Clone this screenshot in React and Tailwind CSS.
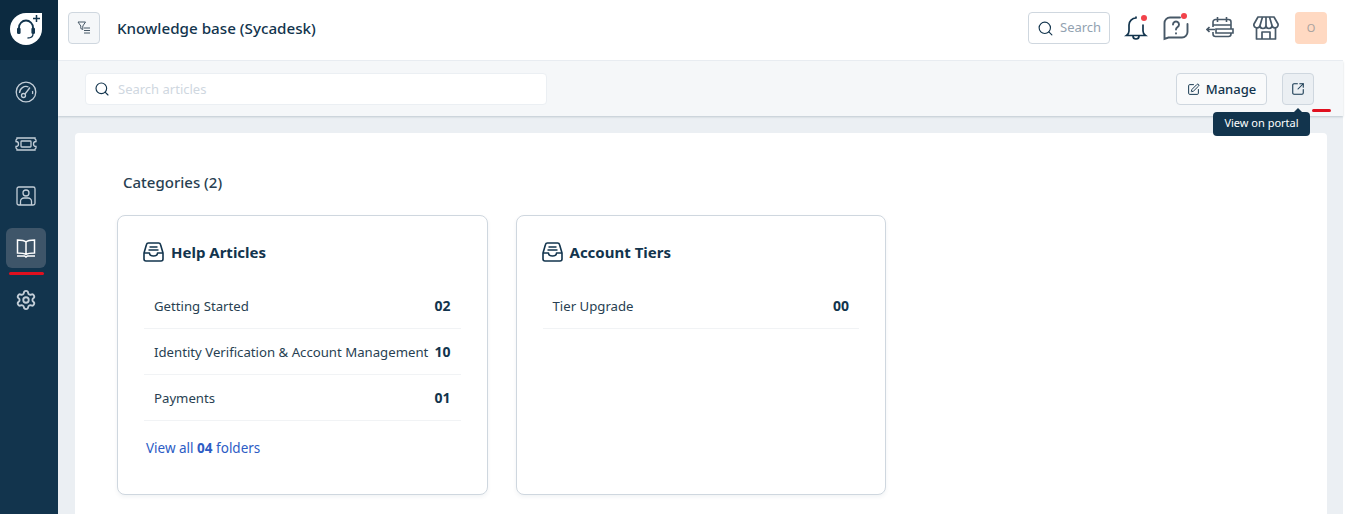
import { Search, Settings, SquarePen, SquareArrowOutUpRight } from 'lucide-react'

const folders = [
  {
    title: 'Help Articles',
    rows: [
      ['Getting Started', '02'],
      ['Identity Verification & Account Management', '10'],
      ['Payments', '01'],
    ],
    more: '04',
  },
  { title: 'Account Tiers', rows: [['Tier Upgrade', '00']] },
]

function Logo() {
  return (
    <svg width="32" height="32" viewBox="0 0 32 32" fill="none">
      <path d="M16 0h16v16a16 16 0 0 1-16 16A16 16 0 0 1 16 0z" fill="#fff" />
      <path d="M9 19v-4.500a7 7 0 0 1 14 0V19" stroke="#12344d" strokeWidth="1.800" />
      <rect x="7" y="14.500" width="3.600" height="6.500" rx="1.500" fill="#12344d" />
      <rect x="21.400" y="14.500" width="3.600" height="6.500" rx="1.500" fill="#12344d" />
      <path d="M23 21c0 3-2 4-5.500 4" stroke="#12344d" strokeWidth="1.300" />
      <path d="M26.500 2v7M23 5.500h7" stroke="#12344d" strokeWidth="1.500" />
    </svg>
  )
}

function FilterIcon() {
  return (
    <svg width="14" height="14" viewBox="0 0 14 14" fill="none" stroke="#475867" strokeWidth="1">
      <path d="M1 1h7.500L5.800 5v3.500L3.800 7.500V5z" />
      <path d="M7 7h6M7 9.500h6M7 12h6" />
    </svg>
  )
}

function GaugeIcon(props) {
  return (
    <svg viewBox="0 0 22 22" fill="none" stroke="currentColor" strokeWidth="1.300" {...props}>
      <circle cx="11" cy="11" r="9.800" />
      <path d="M4.500 12a6.500 6.500 0 0 1 9-6M17.500 10a6.500 6.500 0 0 1 0 3" />
      <circle cx="8.500" cy="14.500" r="2" />
      <path d="M10 13l5-6.500" />
    </svg>
  )
}

function TicketIcon(props) {
  return (
    <svg viewBox="0 0 22 22" fill="none" stroke="currentColor" strokeWidth="1.300" {...props}>
      <path d="M2 5h18a2 2 0 0 0 1 2v1.500a2.500 2.500 0 0 0 0 5V15a2 2 0 0 0-1 2H2a2 2 0 0 0-1-2v-1.500a2.500 2.500 0 0 0 0-5V7a2 2 0 0 0 1-2z" />
      <rect x="6" y="8" width="10" height="6" rx="0.800" />
    </svg>
  )
}

function ContactIcon(props) {
  return (
    <svg viewBox="0 0 22 22" fill="none" stroke="currentColor" strokeWidth="1.300" {...props}>
      <rect x="2" y="2" width="18" height="18" rx="1.800" />
      <circle cx="11" cy="8" r="3" />
      <path d="M5.500 20v-3.500a3.500 3.500 0 0 1 3.500-3.500h4a3.500 3.500 0 0 1 3.500 3.500V20" />
    </svg>
  )
}

function BookIcon(props) {
  return (
    <svg viewBox="0 0 22 22" fill="none" stroke="currentColor" strokeWidth="1.500" {...props}>
      <path d="M11 5C9.500 3.500 6 3 2.500 3v13c3.500 0 7 .3 8.500 1.500C12.500 16.300 16 16 19.500 16V3C16 3 12.500 3.500 11 5zM11 5v12.500" />
      <path d="M2 19h7.500l1.500 1 1.500-1H20" />
    </svg>
  )
}

function BellIcon() {
  return (
    <svg width="24" height="28" viewBox="0 0 24 28" fill="none" stroke="#12344d" strokeWidth="1.700" strokeLinecap="round">
      <path d="M12 3v1M12 4a7 7 0 0 0-7 7v6c0 2-1 3.500-2.500 4.500h19C20 20.500 19 19 19 17v-6" />
      <path d="M9 22c0 4 6 4 6 0" />
    </svg>
  )
}

function HelpIcon() {
  return (
    <svg width="26" height="26" viewBox="0 0 26 26" fill="none" stroke="#475867" strokeWidth="1.900" strokeLinecap="round">
      <path d="M17 2.500H7A5.500 5.500 0 0 0 1.500 8v16l4-1.500H19a5.500 5.500 0 0 0 5.500-5.500V9" />
      <path d="M10 9.500a3 3 0 1 1 4.500 2.600c-1 .6-1.500 1.200-1.500 2.400" />
      <path d="M13 18.200v.3" />
    </svg>
  )
}

function CalendarBack() {
  return (
    <svg width="28" height="24" viewBox="0 0 28 24" fill="none" stroke="#475867" strokeWidth="1.600">
      <path d="M7 11V6a2.500 2.500 0 0 1 2.500-2.500h13A2.500 2.500 0 0 1 25 6v7M7 16v2a2.500 2.500 0 0 0 2.500 2.500h13A2.500 2.500 0 0 0 25 18v-1" />
      <path d="M11.500 1v5M20.500 1v5M7 9h18M10 13h17v4H10z" />
      <path d="M1 13.500h8M3.500 11 1 13.500 3.500 16" />
    </svg>
  )
}

function StoreIcon() {
  return (
    <svg width="26" height="26" viewBox="0 0 26 26" fill="none" stroke="#475867" strokeWidth="1.700" strokeLinejoin="round">
      <path d="M5 2h16l4 7a3 3 0 0 1-6 1.500 3 3 0 0 1-6 0 3 3 0 0 1-6 0A3 3 0 0 1 1 9z" />
      <path d="M9.500 2 7 10.500M16.500 2 19 10.500M13 2v8.500" />
      <path d="M3.500 13v11h19V13M9 24v-7h8v7" />
    </svg>
  )
}

function TrayIcon() {
  return (
    <svg width="21" height="20" viewBox="0 0 21 20" fill="none" stroke="#12344d" strokeWidth="1.600" strokeLinejoin="round">
      <path d="M1 11 3.500 2.500A2 2 0 0 1 5.500 1h10a2 2 0 0 1 2 1.500L20 11v6a2 2 0 0 1-2 2H3a2 2 0 0 1-2-2z" />
      <path d="M1 11h5.500c0 4 8 4 8 0H20M6.500 5h8M5.500 8h10" />
    </svg>
  )
}

function NavItem({ icon: Icon, active }) {
  return (
    <div className={active ? 'relative flex h-10 w-10 items-center justify-center rounded-md bg-[#3e5569] text-white' : 'relative flex h-10 w-10 items-center justify-center rounded-md text-[#c3ced8]'}>
      <Icon width={22} height={22} />
      {active && <span className="absolute left-[3px] top-[44px] h-[3px] w-[35px] rounded-full bg-[#e0101f]" />}
    </div>
  )
}

function Card({ title, rows, more }) {
  return (
    <div className="h-[280px] w-[370.5px] rounded-lg border border-[#cfd7df] bg-white px-[26px] pt-[26px] shadow-[0_2px_4px_rgba(18,52,77,0.06)]">
      <div className="-ml-px flex h-5 items-center gap-[7px] text-[15px] font-bold text-[#12344d]">
        <TrayIcon />
        {title}
      </div>
      <div className="mt-[21px]">
        {rows.map(([name, n]) => (
          <div key={name} className="flex h-[46px] items-center justify-between border-b border-[#f1f3f5] px-[10px] text-[13.2px] text-[#283f52]">
            <span className="pt-[2px]">{name}</span>
            <span className="text-[14px] font-bold text-[#12344d]">{n}</span>
          </div>
        ))}
      </div>
      {more && (
        <div className="ml-[2px] mt-[17px] text-[13.5px] text-[#2c5cc5]">
          View all <b>{more}</b> folders
        </div>
      )}
    </div>
  )
}

export default function App() {
  return (
    <div className="flex h-[514px] w-[1345px] overflow-hidden bg-white font-['Noto_Sans',sans-serif] text-[#12344d]">
      <aside className="w-[58px] shrink-0 bg-[#12344d]">
        <div className="flex h-[60px] items-center bg-[#0c2a40] pb-[2px] pl-[10px]">
          <Logo />
        </div>
        <nav className="flex flex-col gap-3 pl-[6px] pt-[12px]">
          <NavItem icon={GaugeIcon} />
          <NavItem icon={TicketIcon} />
          <NavItem icon={ContactIcon} />
          <NavItem icon={BookIcon} active />
          <NavItem icon={Settings} />
        </nav>
      </aside>

      <div className="mr-[2px] flex min-w-0 flex-1 flex-col bg-[#ebeff3]">
        <header className="flex h-[61px] shrink-0 items-center border-b border-[#ebeff3] bg-white pb-[4px] pl-[10px] pr-[16px]">
          <button className="flex h-8 w-8 items-center justify-center rounded border border-[#cfd7df] bg-[#f5f7f9]">
            <FilterIcon />
          </button>
          <h1 className="ml-[17px] text-[15.2px] font-medium">Knowledge base (Sycadesk)</h1>
          <div className="ml-auto flex items-center">
            <div className="ml-px flex h-8 w-[82px] items-center gap-[6px] rounded border border-[#cfd7df] pl-2 text-[13px] text-[#92a2b1]">
              <Search size={17} color="#12344d" strokeWidth={1.6} />
              Search
            </div>
            <div className="relative ml-[14px]">
              <BellIcon />
              <span className="absolute right-[1px] top-[1px] h-[6px] w-[6px] rounded-full bg-[#f2424a]" />
            </div>
            <div className="relative ml-[15px]">
              <HelpIcon />
              <span className="absolute right-[2px] top-[-2px] h-[6px] w-[6px] rounded-full bg-[#f2424a]" />
            </div>
            <div className="ml-[17px]"><CalendarBack /></div>
            <div className="ml-[19px]"><StoreIcon /></div>
            <div className="ml-[16px] flex h-8 w-8 items-center justify-center rounded bg-[#ffd9c2] text-[11px] text-[#a8a29e]">O</div>
          </div>
        </header>

        <div className="flex h-[55px] shrink-0 items-center bg-[#f5f7f9] pl-[27px] pr-[29px] shadow-[0_1px_2px_rgba(18,52,77,0.2)]">
          <div className="flex h-8 w-[462px] items-center gap-[8px] rounded border border-[#ebeff3] bg-white pl-[8px] text-[13px] text-[#cfd7df]">
            <Search size={16} color="#12344d" strokeWidth={1.7} />
            <span className="pt-[2px]">Search articles</span>
          </div>
          <button className="ml-auto flex h-8 w-[91px] items-center justify-center gap-[6px] rounded border border-[#cfd7df] bg-[#f9fafb] text-[13px] font-medium">
            <SquarePen size={13} strokeWidth={1.8} className="mt-[2px]" />
            <span className="pt-[3px]">Manage</span>
          </button>
          <div className="relative ml-[15px]">
            <button className="flex h-8 w-8 items-center justify-center rounded border border-[#cfd7df] bg-[#ebeff3]">
              <SquareArrowOutUpRight size={14} strokeWidth={1.8} />
            </button>
            <span className="absolute left-[30px] top-[36px] h-[3px] w-[19px] rounded-full bg-[#e0101f]" />
            <div className="absolute left-[-69px] top-[39px] z-10 flex h-[24px] w-[97px] items-center justify-center rounded-sm bg-[#12344d] text-[11px] text-white">
              View on portal
            </div>
            <span className="absolute left-[12px] top-[35px] z-10 h-0 w-0 border-x-[4px] border-b-[4px] border-x-transparent border-b-[#12344d]" />
          </div>
        </div>

        <main className="ml-[17px] mr-[16px] mt-[17px] min-h-0 flex-1 rounded-t bg-white pl-[42px] pt-[39px]">
          <h2 className="ml-[6px] h-5 text-[15px] font-medium leading-5 text-[#283f52]">Categories (2)</h2>
          <div className="mt-[23px] flex gap-[28px]">
            {folders.map(f => <Card key={f.title} {...f} />)}
          </div>
        </main>
      </div>
    </div>
  )
}
